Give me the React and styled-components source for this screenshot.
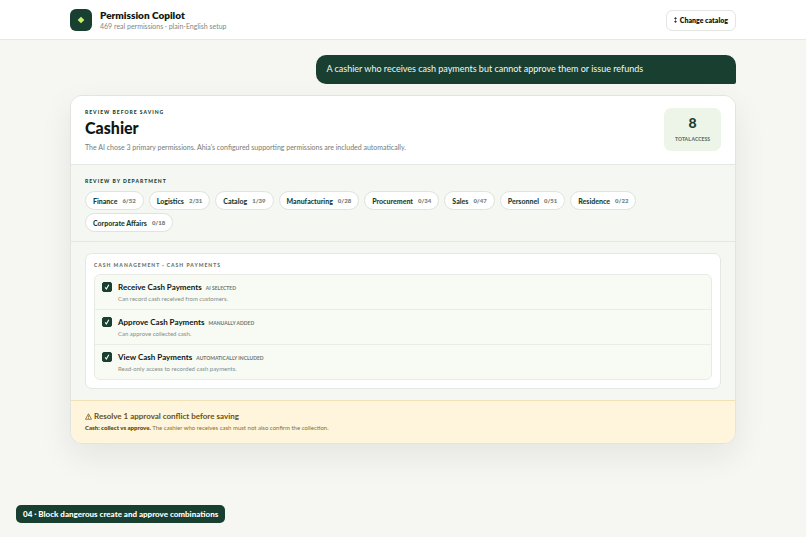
import React from "react";
import styled, { createGlobalStyle } from "styled-components";

const GlobalStyle = createGlobalStyle`
  * { box-sizing: border-box; }
  body {
    margin: 0;
    background: #f6f7f2;
    color: #101613;
    font-family: "Avenir Next", Lato, sans-serif;
    font-size: 8px;
    line-height: 12px;
  }
  button, input { font: inherit; color: inherit; margin: 0; }
  h1, h2, h3, p, ul { margin: 0; padding: 0; }
  ul { list-style: none; }
`;

const Page = styled.div`
  min-height: 100vh;
  display: flex;
  flex-direction: column;
`;

const Header = styled.header`
  display: flex;
  align-items: center;
  gap: 8px;
  padding: 9px 70px 8px;
  background: #fff;
  border-bottom: 1px solid #e6e9e4;
`;

const Logo = styled.div`
  width: 22px;
  height: 22px;
  border-radius: 6px;
  background: #193f31;
  display: grid;
  place-items: center;
`;

const Brand = styled.div`
  flex: 1;
`;

const BrandName = styled.h1`
  font-size: 10px;
  line-height: 12px;
  font-weight: 800;
`;

const BrandNote = styled.p`
  font-size: 7px;
  line-height: 10px;
  color: #818884;
`;

const CatalogButton = styled.button`
  display: flex;
  align-items: center;
  gap: 3px;
  height: 21px;
  padding: 0 7px;
  border: 1px solid #e3e7e2;
  border-radius: 6px;
  background: #fff;
  font-size: 7px;
  font-weight: 800;
`;

const Main = styled.main`
  flex: 1;
  display: flex;
  flex-direction: column;
  gap: 11px;
  padding: 15px 70px 24px;
`;

const Message = styled.p`
  align-self: flex-end;
  width: 63%;
  padding: 7px 10px 8px;
  border-radius: 10px 10px 2px 10px;
  background: #193f31;
  color: #f4f8f4;
  font-size: 9px;
  line-height: 14px;
`;

const Card = styled.article`
  border: 1px solid #e1e5df;
  border-radius: 12px;
  background: #f4f7f2;
  overflow: hidden;
  box-shadow: 0 12px 32px rgba(20, 30, 25, 0.08);
`;

const CardHead = styled.header`
  display: flex;
  align-items: flex-start;
  justify-content: space-between;
  padding: 12px 14px;
  background: #fff;
  border-bottom: 1px solid #e4e8e2;
`;

const Eyebrow = styled.p`
  font-size: 5px;
  line-height: 8px;
  font-weight: 900;
  letter-spacing: 1px;
  text-transform: uppercase;
  color: ${(p) => (p.$muted ? "#68716b" : "#193f31")};
`;

const Title = styled.h2`
  margin: 2px 0 4px;
  font-size: 16px;
  line-height: 20px;
  font-weight: 900;
`;

const Summary = styled.p`
  font-size: 7px;
  line-height: 10px;
  color: #747b77;
`;

const Total = styled.div`
  min-width: 57px;
  height: 43px;
  padding: 6px 8px;
  border-radius: 7px;
  background: #edf5e9;
  text-align: center;
`;

const TotalValue = styled.strong`
  display: block;
  font-size: 14px;
  line-height: 18px;
  font-weight: 900;
  color: #193f31;
`;

const TotalLabel = styled.span`
  display: block;
  margin-top: 2px;
  font-size: 5px;
  line-height: 10px;
  font-weight: 900;
  color: #66706a;
`;

const Departments = styled.section`
  padding: 12px 14px 9px;
  border-bottom: 1px solid #e2e7e0;
`;

const PillList = styled.ul`
  display: flex;
  flex-wrap: wrap;
  gap: 3px 5px;
  margin-top: 6px;
`;

const Pill = styled.button`
  display: flex;
  align-items: center;
  gap: 5px;
  height: 19px;
  padding: 0 7px;
  border: 1px solid #dde5dc;
  border-radius: 10px;
  background: #fff;
  font-size: 7px;
  font-weight: 900;
  color: #193f31;
`;

const PillCount = styled.span`
  font-size: 6px;
  font-weight: 800;
  color: #7b857f;
`;

const Review = styled.section`
  padding: 11px 14px;
`;

const Group = styled.div`
  padding: 7px 8px 8px;
  border: 1px solid #e4e8e2;
  border-radius: 7px;
  background: #fff;
`;

const PermissionList = styled.ul`
  margin-top: 5px;
  border: 1px solid #e7ebe4;
  border-radius: 6px;
  background: #f8fbf4;
`;

const PermissionRow = styled.li`
  & + & { border-top: 1px solid #e9ede6; }
`;

const PermissionLabel = styled.label`
  display: grid;
  grid-template-columns: 10px 1fr;
  column-gap: 6px;
  padding: 6px 7px;
`;

const CheckCell = styled.span`
  display: grid;
  align-self: start;
  margin-top: 1px;
  width: 10px;
  height: 10px;
  & > * { grid-area: 1 / 1; }
`;

const CheckInput = styled.input`
  appearance: none;
  width: 10px;
  height: 10px;
  border: 1px solid #193f31;
  border-radius: 2px;
  background: #fff;
  &:checked { background: #193f31; }
`;

const CheckMark = styled.svg`
  width: 10px;
  height: 10px;
  z-index: 1;
  pointer-events: none;
`;

const PermissionHeading = styled.span`
  display: flex;
  align-items: baseline;
  gap: 4px;
`;

const PermissionName = styled.strong`
  font-size: 8px;
  font-weight: 700;
`;

const Origin = styled.span`
  font-size: 5px;
  line-height: 8px;
  font-weight: 700;
  text-transform: uppercase;
  color: #6d766f;
`;

const PermissionNote = styled.span`
  display: block;
  padding-top: 2px;
  font-size: 6px;
  line-height: 8px;
  color: #848c87;
`;

const Conflict = styled.section`
  padding: 9px 14px;
  border-top: 1px solid #f0e2b4;
  background: #fff5dc;
  color: #6b5110;
`;

const ConflictTitle = styled.h3`
  display: flex;
  align-items: center;
  gap: 2px;
  font-size: 8px;
  line-height: 12px;
  font-weight: 700;
`;

const ConflictText = styled.p`
  font-size: 6px;
  line-height: 12px;
  color: #87702f;
  strong { color: #6b5110; font-weight: 800; }
`;

const Footer = styled.footer`
  padding: 0 16px 14px;
  display: flex;
`;

const Caption = styled.p`
  padding: 3px 7px;
  border-radius: 5px;
  background: #193f31;
  color: #fff;
  font-size: 8px;
  line-height: 12px;
  font-weight: 900;
`;

const departments = [
  ["Finance", "6/52"],
  ["Logistics", "2/31"],
  ["Catalog", "1/39"],
  ["Manufacturing", "0/28"],
  ["Procurement", "0/34"],
  ["Sales", "0/47"],
  ["Personnel", "0/51"],
  ["Residence", "0/22"],
  ["Corporate Affairs", "0/18"],
];

const permissions = [
  ["Receive Cash Payments", "AI selected", "Can record cash received from customers."],
  ["Approve Cash Payments", "Manually added", "Can approve collected cash."],
  ["View Cash Payments", "Automatically included", "Read-only access to recorded cash payments."],
];

function Permission({ name, origin, note }) {
  return (
    <PermissionRow>
      <PermissionLabel>
        <CheckCell>
          <CheckInput type="checkbox" defaultChecked />
          <CheckMark viewBox="0 0 10 10" aria-hidden="true">
            <path d="M3.2 5.4 4.4 7 6.8 2.8" fill="none" stroke="#fff" strokeWidth="1.1" />
          </CheckMark>
        </CheckCell>
        <span>
          <PermissionHeading>
            <PermissionName>{name}</PermissionName>
            <Origin>{origin}</Origin>
          </PermissionHeading>
          <PermissionNote>{note}</PermissionNote>
        </span>
      </PermissionLabel>
    </PermissionRow>
  );
}

export default function App() {
  return (
    <Page>
      <GlobalStyle />
      <Header>
        <Logo>
          <svg width="8" height="8" viewBox="0 0 8 8" aria-hidden="true">
            <path d="M4 .7 7.3 4 4 7.3.7 4Z" fill="#c8f26a" />
          </svg>
        </Logo>
        <Brand>
          <BrandName>Permission Copilot</BrandName>
          <BrandNote>469 real permissions · plain-English setup</BrandNote>
        </Brand>
        <CatalogButton type="button">
          <svg width="3" height="6" viewBox="0 0 3 6" aria-hidden="true">
            <path d="M1.5 1v4M.4 1.4 1.5.6 2.6 1.4ZM.4 4.6 1.5 5.4 2.6 4.6Z" fill="#101613" stroke="#101613" strokeWidth=".5" />
          </svg>
          Change catalog
        </CatalogButton>
      </Header>

      <Main>
        <Message>A cashier who receives cash payments but cannot approve them or issue refunds</Message>

        <Card>
          <CardHead>
            <div>
              <Eyebrow>Review before saving</Eyebrow>
              <Title>Cashier</Title>
              <Summary>
                The AI chose 3 primary permissions. Ahia's configured supporting permissions are included automatically.
              </Summary>
            </div>
            <Total>
              <TotalValue>8</TotalValue>
              <TotalLabel>TOTAL ACCESS</TotalLabel>
            </Total>
          </CardHead>

          <Departments>
            <Eyebrow>Review by department</Eyebrow>
            <PillList>
              {departments.map(([name, count]) => (
                <li key={name}>
                  <Pill type="button">
                    {name}
                    <PillCount>{count}</PillCount>
                  </Pill>
                </li>
              ))}
            </PillList>
          </Departments>

          <Review>
            <Group>
              <Eyebrow $muted>Cash Management · Cash Payments</Eyebrow>
              <PermissionList>
                {permissions.map(([name, origin, note]) => (
                  <Permission key={name} name={name} origin={origin} note={note} />
                ))}
              </PermissionList>
            </Group>
          </Review>

          <Conflict>
            <ConflictTitle>
              <svg width="7" height="7" viewBox="0 0 14 14" fill="none" stroke="#6b5110" strokeWidth="1.4" aria-hidden="true">
                <path d="M7 1.5 13 12.5H1ZM7 5v4M7 10v1.4" />
              </svg>
              Resolve 1 approval conflict before saving
            </ConflictTitle>
            <ConflictText>
              <strong>Cash: collect vs approve.</strong> The cashier who receives cash must not also confirm the collection.
            </ConflictText>
          </Conflict>
        </Card>
      </Main>

      <Footer>
        <Caption>04 · Block dangerous create and approve combinations</Caption>
      </Footer>
    </Page>
  );
}
